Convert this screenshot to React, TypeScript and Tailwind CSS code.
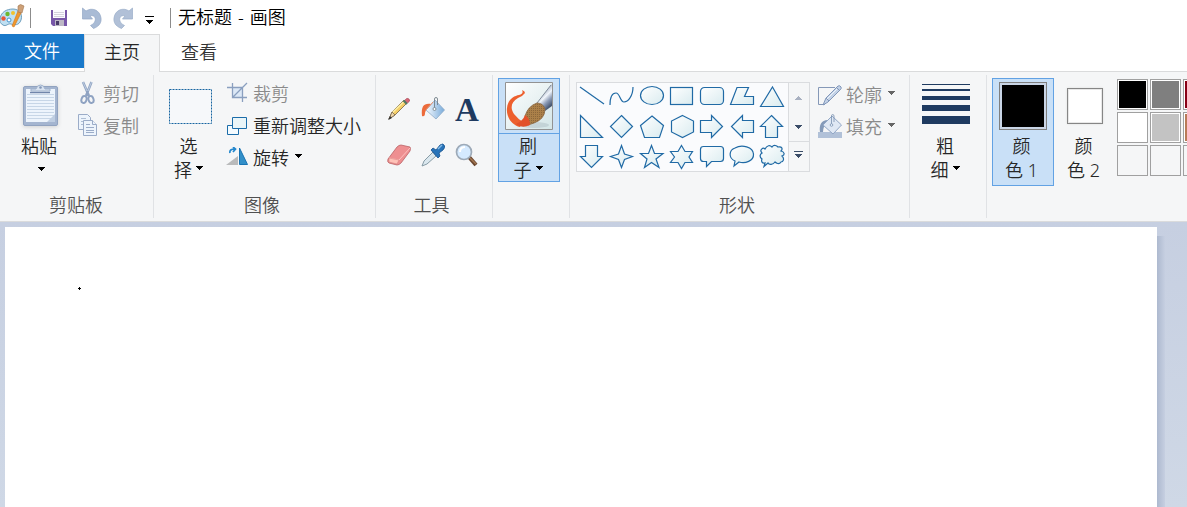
import type { ReactNode } from 'react';

const shapes: ReactNode[] = [
  <path d="M4 5l24 17" />,
  <path d="M4 23c0-8 2-12 6-12s4 9 8 9s9-6 9-15" />,
  <ellipse cx="16" cy="13.500" rx="11.500" ry="9" />,
  <rect x="4.500" y="5.500" width="22" height="17" />,
  <rect x="4.500" y="5.500" width="23" height="17" rx="4" />,
  <path d="M4.500 22.500L11 5.500H22.500L18.500 14.500H27.500V22.500Z" />,
  <path d="M16.500 5L27.500 24.500H4.500Z" />,
  <path d="M4.500 3.500V25.500H26.500Z" />,
  <path d="M15.500 3.500L26.500 14.500L15.500 25.500L4.500 14.500Z" />,
  <path d="M16 4L27.500 13.500L23.500 25.500H8.500L4.500 13.500Z" />,
  <path d="M16.500 3.500L27.500 9V20L16.500 25.500L5.500 20V9Z" />,
  <path d="M4.500 8.500H15.500V3.500L26.500 14.500L15.500 25.500V20.500H4.500Z" />,
  <path d="M27.500 8.500H16.500V3.500L5.500 14.500L16.500 25.500V20.500H27.500Z" />,
  <path d="M15.500 3.500L26.500 14.500H21.500V25.500H9.500V14.500H4.500Z" />,
  <path d="M9.500 3.500H21.500V14.500H26.500L15.500 25.500L4.500 14.500H9.500Z" />,
  <path d="M15.500 3.500L18.500 12L26.500 14.500L18.500 17.500L15.500 25.500L12.500 17.500L4.500 14.500L12.500 12Z" />,
  <path d="M15.500 3.500L18.500 11.500H27L20 17L23 25.500L15.500 20.500L8.500 25.500L11 17L4.500 11.500H12.500Z" />,
  <path d="M15.500 3.500L19 9.500H26.500L23 15L26.500 20.500H19L15.500 26.500L12 20.500H4.500L8.500 15L4.500 9.500H12Z" />,
  <path d="M7.500 4.500H24.500Q27.500 4.500 27.500 7.500V16.500Q27.500 19.500 24.500 19.500H15.500L10.500 24.500V19.500H7.500Q4.500 19.500 4.500 16.500V7.500Q4.500 4.500 7.500 4.500Z" />,
  <path d="M8 24L9 19C2 16 3 8 9 6C16 2 27 5 27.500 12C28 19 19 22 13 20Z" />,
  <path d="M8 24.500L9 21C6 22 5 19 6 17C3 15 4 12 6 11C3 8 7 5 9 7C11 3 14 3 16 5C18 2 21 4 22 5C26 4 27 7 25 9C29 10 29 13 26 14C29 17 27 20 25 20C23 23 20 21 19 20C17 23 13 23 12 21Z" />,
];

const palette = [
  'bg-black', 'bg-[#7f7f7f]', 'bg-[#880015]',
  'bg-white', 'bg-[#c3c3c3]', 'bg-[#b97a57]',
  '', '', '',
];

function Arrow({ className = 'text-black' }: { className?: string }) {
  return (
    <svg width="7" height="4" viewBox="0 0 7 4" shapeRendering="crispEdges" className={className}>
      <path d="M0 0H7V1H6V2H5V3H4V4H3V3H2V2H1V1H0Z" fill="currentColor" />
    </svg>
  );
}

function Separator() {
  return <div className="mt-[3px] h-[143px] w-px shrink-0 bg-[#e0e2e5]" />;
}

function Group({ label = '', className, children }: { label?: string; className: string; children: ReactNode }) {
  return (
    <div className={`flex shrink-0 flex-col ${className}`}>
      <div className="flex h-[121px] items-start">{children}</div>
      <div className="h-6 pr-px text-center text-[#505050]">{label}</div>
    </div>
  );
}

function Command({ icon, label, arrow = false, disabled = false }: { icon: ReactNode; label: string; arrow?: boolean; disabled?: boolean }) {
  return (
    <div className={`flex h-8 items-center ${disabled ? 'text-[#8a8a8a]' : 'text-[#262626]'}`}>
      <div className="flex w-7 shrink-0 items-center">{icon}</div>
      <span className="whitespace-nowrap">{label}</span>
      {arrow && (
        <span className="mb-1 ml-[6px]">
          <Arrow className={disabled ? 'text-[#666]' : 'text-black'} />
        </span>
      )}
    </div>
  );
}

function StackedLabel({ first, second, arrow = true }: { first: string; second: string; arrow?: boolean }) {
  return (
    <div className="flex flex-col items-center text-[#262626]">
      <span>{first}</span>
      <span className="flex items-center gap-1 whitespace-pre">
        {second}
        {arrow && <span className="mb-[5px]"><Arrow /></span>}
      </span>
    </div>
  );
}

function PaintLogo() {
  return (
    <svg width="25" height="25" viewBox="0 0 25 25">
      <path d="M0 16C0 8 7 5 13 5S23 10 21 16S14 21 11 20S6 23 3 21S0 18 0 16Z" fill="#bfe0f3" stroke="#6f9fbd" />
      <circle cx="3.500" cy="14.500" r="2.200" fill="#e8563a" />
      <circle cx="7.500" cy="10" r="2.200" fill="#6fb72d" />
      <circle cx="13" cy="9" r="2" fill="#f2c22e" />
      <circle cx="9" cy="16" r="2" fill="#fff" stroke="#4492cd" />
      <path d="M18 7L12 22L14 23L21 9Z" fill="#f0982d" stroke="#d0761d" strokeWidth=".6" />
      <path d="M18 2Q20-1 24 2L22 9L18 8Z" fill="#cda077" stroke="#a17550" strokeWidth=".6" />
    </svg>
  );
}

function TitleBar() {
  return (
    <div className="flex h-[34px] items-start bg-white">
      <div className="mt-1 h-[25px] w-[25px]"><PaintLogo /></div>
      <div className="ml-[5px] mt-2 h-5 w-px bg-[#8c8c8c]" />
      <svg width="16" height="16" viewBox="0 0 16 16" className="ml-5 mt-[10px]">
        <path d="M0 0H16V16H2L0 14Z" fill="#7757a8" />
        <path d="M2 0H14V8H2Z" fill="#fafaff" />
        <path d="M3 2.500H13M3 4.500H13M3 6.500H13" stroke="#d3d1dc" />
        <path d="M4 10H13V16H4Z" fill="#bcb8c5" />
        <path d="M5 11H8V15H5Z" fill="#493c69" />
      </svg>
      <svg width="20" height="22" viewBox="0 0 20 22" className="ml-[15px] mt-[7px]">
        <path d="M.5 1V12H10.500L8 9C14 7 16 15 8.500 18.500L11.500 21.500C18 19 19.500 15 19 11C18 3 10 0 4 4Z" fill="#a9bbd5" stroke="#93a8c6" strokeWidth=".7" />
      </svg>
      <svg width="20" height="22" viewBox="0 0 20 22" className="ml-[11px] mt-[7px]">
        <path d="M19.500 1V12H9.500L12 9C6 7 4 15 11.500 18.500L8.500 21.500C2 19 .5 15 1 11C2 3 10 0 16 4Z" fill="#b1c0d7" stroke="#99adc9" strokeWidth=".7" />
      </svg>
      <svg width="9" height="8" viewBox="0 0 9 8" shapeRendering="crispEdges" className="ml-3 mt-4">
        <path d="M0 0H9V1H0ZM1 4H8V5H7V6H6V7H5V8H4V7H3V6H2V5H1Z" />
      </svg>
      <div className="ml-4 mt-2 h-5 w-px bg-[#8c8c8c]" />
      <span className="ml-[7px] mt-[5px] text-black [word-spacing:1.3px]">无标题 - 画图</span>
    </div>
  );
}

function Tabs() {
  return (
    <div className="flex h-[38px] bg-white">
      <div className="w-[84px] border-b border-[#dadbdc]">
        <div className="h-[34px] bg-[#1979ca] pt-[5px] text-center text-white">文件</div>
      </div>
      <div className="w-[76px] border-x border-t border-[#dadbdc] bg-[#f5f6f7] pt-[5px] text-center text-[#262626]">主页</div>
      <div className="flex-1 border-b border-[#dadbdc] pl-[21px] pt-[6px] text-[#333]">查看</div>
    </div>
  );
}

function ClipboardIcon() {
  return (
    <svg width="36" height="43" viewBox="0 0 36 43" className="ml-1 drop-shadow-sm">
      <rect x=".5" y="2.500" width="34" height="39" rx="1.500" fill="#a4b5d0" stroke="#91a3c0" />
      <path d="M3 5H32V38H3Z" fill="#edf4fc" />
      <path d="M4 10.500H31M4 13.500H31M4 16.500H31M4 19.500H31M4 22.500H31M4 25.500H31M4 28.500H31M4 31.500H31M4 34.500H31" stroke="#c7d6e7" />
      <path d="M24 38L32 30V38Z" fill="#bfcee2" />
      <path d="M7 8.500H27" stroke="#7085aa" strokeWidth="1.500" />
      <path d="M8 7V5H13Q14 1 17.500 1T22 5H27V7Z" fill="#d9e3f0" stroke="#9eb0cb" />
      <circle cx="17.500" cy="3.500" r="1.300" fill="#8498b9" />
    </svg>
  );
}

function CutIcon() {
  return (
    <svg width="15" height="23" viewBox="0 0 15 23" className="-mt-1 ml-[5px]" fill="none" stroke="#8fa3c2">
      <path d="M3 1L9 15M11.500 1L6 15" strokeWidth="2.500" />
      <path d="M3 1L7 10M11.500 1L8 10" stroke="#c8d5e7" strokeWidth=".8" />
      <ellipse cx="4" cy="18.500" rx="2.500" ry="3.500" strokeWidth="2" transform="rotate(18 4 18.5)" />
      <ellipse cx="11" cy="18.500" rx="2.500" ry="3.500" strokeWidth="2" transform="rotate(-18 11 18.5)" />
    </svg>
  );
}

function CopyIcon() {
  return (
    <svg width="19" height="22" viewBox="0 0 19 22" className="-mt-[2px] ml-[3px]" fill="#edf4fc" stroke="#9bacc8">
      <path d="M.5.5H9.500L12.500 3.500V15.500H.5Z" />
      <path d="M3 4.500H8M3 7.500H8M3 10.500H6" stroke="#aebed4" />
      <path d="M5.500 6.500H14.500L18.500 10.500V21.500H5.500Z" />
      <path d="M14.500 6.500V10.500H18.500M8 10.500H12M8 13.500H16M8 16.500H16M8 18.500H16" />
    </svg>
  );
}

function CropIcon() {
  return (
    <svg width="21" height="21" viewBox="0 0 21 21" className="-mt-[3px] ml-[2px]" fill="none" stroke="#8a9fbf">
      <path d="M5 5H15V15H5Z" fill="#dce8f6" stroke="none" />
      <path d="M5.500 1V15.500H20M0 5.500H15.500V20M6 15L20 1" strokeWidth="1.300" />
    </svg>
  );
}

function ResizeIcon() {
  return (
    <svg width="20" height="18" viewBox="0 0 20 18" fill="#f4fbff" stroke="#1b6ca9" className="ml-[2px]">
      <path d="M.5 8.500H11.500V17.500H.5Z" />
      <path d="M5.500.5H19.500V11.500H5.500Z" fill="#eaf5f8" />
    </svg>
  );
}

function RotateIcon() {
  return (
    <svg width="24" height="19" viewBox="0 0 24 19" className="-mt-[3px] shrink-0">
      <path d="M1 18L13 9V18Z" fill="#b9babb" />
      <path d="M14.500 1V17.500H22.500Z" fill="#328fc8" stroke="#1974b3" />
      <path d="M5 6Q4 2 10 2M8 0L10.500 2L8 5" fill="none" stroke="#2387cd" strokeWidth="1.700" />
    </svg>
  );
}

function PencilIcon() {
  return (
    <svg width="24" height="24" viewBox="0 0 24 24">
      <path d="M2 22L5 15L17 3L20 6L8 18Z" fill="#f4ce68" stroke="#766344" strokeWidth=".8" />
      <path d="M5.500 15.500L17.500 4" stroke="#fff0a6" strokeWidth="1.500" />
      <path d="M2 22L5 15L8 18Z" fill="#eed5aa" stroke="#6a5b48" strokeWidth=".7" />
      <path d="M1 23L3 19L5 21Z" fill="#333" />
      <path d="M16.500 3.500L20 7" stroke="#527a65" strokeWidth="2.200" />
      <path d="M18 3Q20 0 22 2T20.500 6Z" fill="#d96676" stroke="#a34b59" strokeWidth=".6" />
    </svg>
  );
}

function BucketIcon() {
  return (
    <svg width="24" height="24" viewBox="0 0 24 24">
      <defs>
        <linearGradient id="bucket"><stop stopColor="#f7fbff" /><stop offset="1" stopColor="#77aada" /></linearGradient>
      </defs>
      <path d="M10 7C3 6 0 9 1 19Q4 20 4 16Q5 11 9 10Z" fill="#ec6b3b" />
      <path d="M14 3L23.500 13L15 22L5 13Z" fill="url(#bucket)" stroke="#8eabc8" strokeWidth=".8" />
      <path d="M5 13L12 5" stroke="#ec936d" />
      <path d="M13.500 12V2Q13.500.500 15 .500T16.500 2V8" fill="none" stroke="#74818a" strokeWidth=".9" />
      <circle cx="13.500" cy="12" r="1.500" fill="#fff" stroke="#6f7d88" strokeWidth=".8" />
    </svg>
  );
}

function EraserIcon() {
  return (
    <svg width="24" height="24" viewBox="0 -1 24 24">
      <path d="M1 15L10 3Q12 1 14 1L23 3Q24 4 23 7L14 19Q12 21 10 21L2 19Q0 18 1 15Z" fill="#ee8f91" stroke="#ba6266" strokeWidth=".8" />
      <path d="M2 14L12 16L23 4" fill="none" stroke="#ffc0be" />
      <path d="M2 14L12 16L10 20L2 18Z" fill="#ffc2b8" stroke="#d27a78" strokeWidth=".5" />
    </svg>
  );
}

function PickerIcon() {
  return (
    <svg width="24" height="24" viewBox="0 0 24 24">
      <path d="M12 9L3 18L1 23L6 21L15 13Z" fill="#dae7ee" stroke="#7d929d" strokeWidth=".9" />
      <path d="M10 7L12 5L15 7L19 2Q22 0 23 2Q25 4 22 7L18 10L19 13L17 15Z" fill="#2773b9" stroke="#15528e" strokeWidth=".8" />
      <path d="M17 6L21 2" stroke="#86bce8" strokeWidth="1.500" />
    </svg>
  );
}

function MagnifierIcon() {
  return (
    <svg width="24" height="24" viewBox="0 0 24 24">
      <path d="M14 14L21 22" stroke="#69452e" strokeWidth="4" />
      <path d="M15 15L21 21" stroke="#a57953" strokeWidth="1.500" />
      <circle cx="9" cy="9" r="7.500" fill="#d5eaff" stroke="#9daab8" strokeWidth="1.700" />
      <path d="M5 9Q5 4 10 4" fill="none" stroke="#fff" strokeWidth="2" />
    </svg>
  );
}

function BrushIcon() {
  return (
    <svg width="48" height="48" viewBox="0 0 48 48">
      <defs>
        <linearGradient id="paper" x2="1" y2="1"><stop stopColor="#fff" /><stop offset="1" stopColor="#d3e5e7" /></linearGradient>
        <linearGradient id="handle" gradientUnits="userSpaceOnUse" x1="35" y1="14" x2="45" y2="24">
          <stop stopColor="#b8c2d2" /><stop offset=".3" stopColor="#f0f5fb" /><stop offset=".65" stopColor="#8c9bb6" /><stop offset="1" stopColor="#4a5a75" />
        </linearGradient>
        <pattern id="bristle" width="2" height="2" patternUnits="userSpaceOnUse">
          <path d="M0 0H2V2H0Z" fill="#ab8049" /><path d="M0 0H1V1H0Z" fill="#8c673b" />
        </pattern>
      </defs>
      <path d="M.5.5H47.500V47.500H.5Z" fill="url(#paper)" stroke="#929292" />
      <ellipse cx="29" cy="43" rx="15" ry="3" fill="#aebdc3" opacity=".5" />
      <path d="M17 8Q20 9 20 11Q18 14 13 16C6 20 5 26 9 32Q13 37 18 40L15 45C6 43 1 34 2 26C3 17 9 14 14 13Q19 12 17 8Z" fill="#ed602e" />
      <path d="M32 21L46 3L47 2V24L40 29Z" fill="url(#handle)" />
      <path d="M32 21L46 3" stroke="#6b7787" strokeWidth=".8" />
      <path d="M20 34Q23 24 32 21Q38 21 40 27Q40 37 29 41L23 43Z" fill="url(#bristle)" stroke="#86633d" strokeWidth=".8" />
      <path d="M11 42Q18 39 20 33Q25 36 25 43Q17 47 11 42Z" fill="#e2512a" />
    </svg>
  );
}

function OutlineIcon() {
  return (
    <svg width="24" height="21" viewBox="0 0 24 21" className="-mb-px">
      <path d="M17 2.500H.5V19.500H7" fill="none" stroke="#8598b7" />
      <path d="M5 20L8 13L20 1Q22 0 23 2Q24 3 22 5L10 17Z" fill="#c3d2e7" stroke="#8297b9" />
      <path d="M9 14L20 3" stroke="#edf4fb" />
      <path d="M18 2L22 6M8 13L11 16" stroke="#8196b8" />
    </svg>
  );
}

function FillIcon() {
  return (
    <svg width="24" height="25" viewBox="0 0 24 25" className="-mt-px">
      <path d="M0 18H24V24H0Z" fill="#b1c1d8" />
      <path d="M10 6C3 6 1 11 2 18H5Q5 12 9 10Z" fill="#849ab9" />
      <path d="M14 2L23.500 11L15 20L5 11Z" fill="#dfe8f4" stroke="#91a6c5" />
      <path d="M13.500 11V2Q13.500.500 14.700.500T16 2V8" fill="none" stroke="#7991b0" strokeWidth=".8" />
      <circle cx="13.500" cy="11" r="1.300" fill="#edf4fc" stroke="#7991b0" strokeWidth=".8" />
    </svg>
  );
}

function ShapeGallery() {
  return (
    <div className="mt-[10px] flex h-[90px] w-[234px] border border-[#dadcdf] bg-[#fafbfd]">
      <svg width="0" height="0" className="absolute">
        <linearGradient id="shape" x2="1" y2="1"><stop stopColor="#fff" /><stop offset="1" stopColor="#d9ebef" /></linearGradient>
      </svg>
      <div className="grid w-[211px] shrink-0 grid-cols-[repeat(7,30px)] auto-rows-[30px]">
        {shapes.map((shape, i) => (
          <svg key={i} width="30" height="29" viewBox="1 1 30 29" fill={i < 2 ? 'none' : 'url(#shape)'} stroke="#206aa5" strokeWidth="1.2" className="overflow-visible">
            {shape}
          </svg>
        ))}
      </div>
      <div className="flex flex-1 flex-col border-l border-[#dadcdf] bg-[#f5f6f7]">
        <div className="flex h-[29px] items-center justify-center pr-px"><Arrow className="rotate-180 text-[#a9b1c1]" /></div>
        <div className="flex h-[29px] items-center justify-center pr-px"><Arrow className="text-[#3b4d68]" /></div>
        <div className="flex flex-1 flex-col items-center border-t border-[#dadcdf] pr-px pt-[9px]">
          <div className="mb-[2px] h-px w-[9px] bg-[#3b4d68]" />
          <Arrow className="text-[#3b4d68]" />
        </div>
      </div>
    </div>
  );
}

function Ribbon() {
  return (
    <div className="flex h-[150px] overflow-hidden border-b border-[#dadbdc] bg-[#f5f6f7]">
      <Group label="剪贴板" className="w-[153px]">
        <div className="ml-[21px] flex w-9 flex-col items-center pt-3 text-[#262626]">
          <ClipboardIcon />
          <span className="mt-[7px]">粘贴</span>
          <span className="ml-[5px] mt-[9px] flex"><Arrow /></span>
        </div>
        <div className="ml-[18px] pt-[6px]">
          <Command icon={<CutIcon />} label="剪切" disabled />
          <Command icon={<CopyIcon />} label="复制" disabled />
        </div>
      </Group>
      <Separator />
      <Group label="图像" className="w-[221px] pr-1">
        <div className="ml-[15px] flex w-[43px] shrink-0 flex-col items-center pt-[17px]">
          <svg width="43" height="35" viewBox="0 0 43 35">
            <path d="M.5.5H42.500V34.500H.5Z" fill="#f6f8fa" stroke="#1764a1" strokeDasharray="2 1" />
          </svg>
          <div className="mt-[10px] w-full pr-1"><StackedLabel first="选" second="择" /></div>
        </div>
        <div className="ml-[13px] pt-[6px]">
          <Command icon={<CropIcon />} label="裁剪" disabled />
          <Command icon={<ResizeIcon />} label="重新调整大小" />
          <Command icon={<RotateIcon />} label="旋转" arrow />
        </div>
      </Group>
      <Separator />
      <Group label="工具" className="w-[116px] pr-1">
        <div className="ml-[11px] grid grid-cols-[34px_34px_24px] gap-y-[22px] pt-[25px]">
          <PencilIcon />
          <BucketIcon />
          <div className="h-6 text-center font-['Liberation_Serif',serif] text-[33px] font-bold leading-[26px] text-[#1e3a60]">A</div>
          <EraserIcon />
          <PickerIcon />
          <MagnifierIcon />
        </div>
      </Group>
      <Separator />
      <Group className="w-[76px]">
        <div className="ml-[5px] mt-[6px] h-[104px] w-[62px] border border-[#62a2e4] bg-[#c9e0f7]">
          <div className="flex h-[55px] items-start justify-center border-b border-[#62a2e4] pt-[3px]"><BrushIcon /></div>
          <div className="pr-[2px]"><StackedLabel first="刷" second="子" /></div>
        </div>
      </Group>
      <Separator />
      <Group label="形状" className="w-[339px] pr-1">
        <div className="ml-[6px]"><ShapeGallery /></div>
        <div className="ml-2 pt-[7px]">
          <Command icon={<OutlineIcon />} label="轮廓" arrow disabled />
          <Command icon={<FillIcon />} label="填充" arrow disabled />
        </div>
      </Group>
      <Separator />
      <Group className="w-[76px]">
        <div className="ml-3 w-12 pt-3">
          <div className="h-px bg-[#1e3a60]" />
          <div className="mt-1 h-[2px] bg-[#1e3a60]" />
          <div className="mt-[5px] h-1 bg-[#1e3a60]" />
          <div className="mt-[5px] h-[6px] bg-[#1e3a60]" />
          <div className="mt-[5px] h-2 bg-[#1e3a60]" />
          <div className="mt-[10px] pr-[2px]"><StackedLabel first="粗" second="细" /></div>
        </div>
      </Group>
      <Separator />
      <div className="flex shrink-0 items-start pt-[6px]">
        <div className="ml-[5px] h-[108px] w-[62px] border border-[#62a2e4] bg-[#c9e0f7] pt-[3px]">
          <div className="mx-auto h-12 w-12 border border-[#7f7f7f] bg-[#c9d5e6] p-[2px]"><div className="h-full bg-black" /></div>
          <div className="mt-1 pr-[3px]"><StackedLabel first="颜" second="色 1" arrow={false} /></div>
        </div>
        <div className="w-[62px] pt-[10px]">
          <div className="mx-auto h-9 w-9 border border-[#868686] bg-[#e8e8e8] p-px shadow-[0_0_2px_#ddd]"><div className="h-full bg-white" /></div>
          <div className="mt-[10px] pr-[3px]"><StackedLabel first="颜" second="色 2" arrow={false} /></div>
        </div>
        <div className="ml-px mt-px grid grid-cols-[31px_31px_31px] gap-[2px]">
          {palette.map((color, i) => (
            <div key={i} className={`h-[31px] border border-[#a0a0a0] ${color ? 'bg-white p-px' : ''}`}>
              <div className={`h-full ${color}`} />
            </div>
          ))}
        </div>
      </div>
    </div>
  );
}

export default function App() {
  return (
    <div className="flex h-[507px] w-[1187px] flex-col overflow-hidden font-['Noto_Sans','Noto_Sans_CJK_SC',sans-serif] text-[18px] font-[350] leading-6">
      <TitleBar />
      <Tabs />
      <Ribbon />
      <div className="flex flex-1 bg-linear-to-b from-[#c6cfe1] to-[#cfd8e6] pl-[5px] pt-[5px]">
        <div className="w-[1152px] bg-white pl-[73px] pt-[60px]">
          <svg width="3" height="3" viewBox="0 0 3 3" shapeRendering="crispEdges">
            <path d="M1 0H2V1H3V2H2V3H1V2H0V1H1Z" />
          </svg>
        </div>
        <div className="mt-[9px] w-2 bg-linear-to-r from-[#adb9cf] to-[#c6cfe1]" />
      </div>
    </div>
  );
}
